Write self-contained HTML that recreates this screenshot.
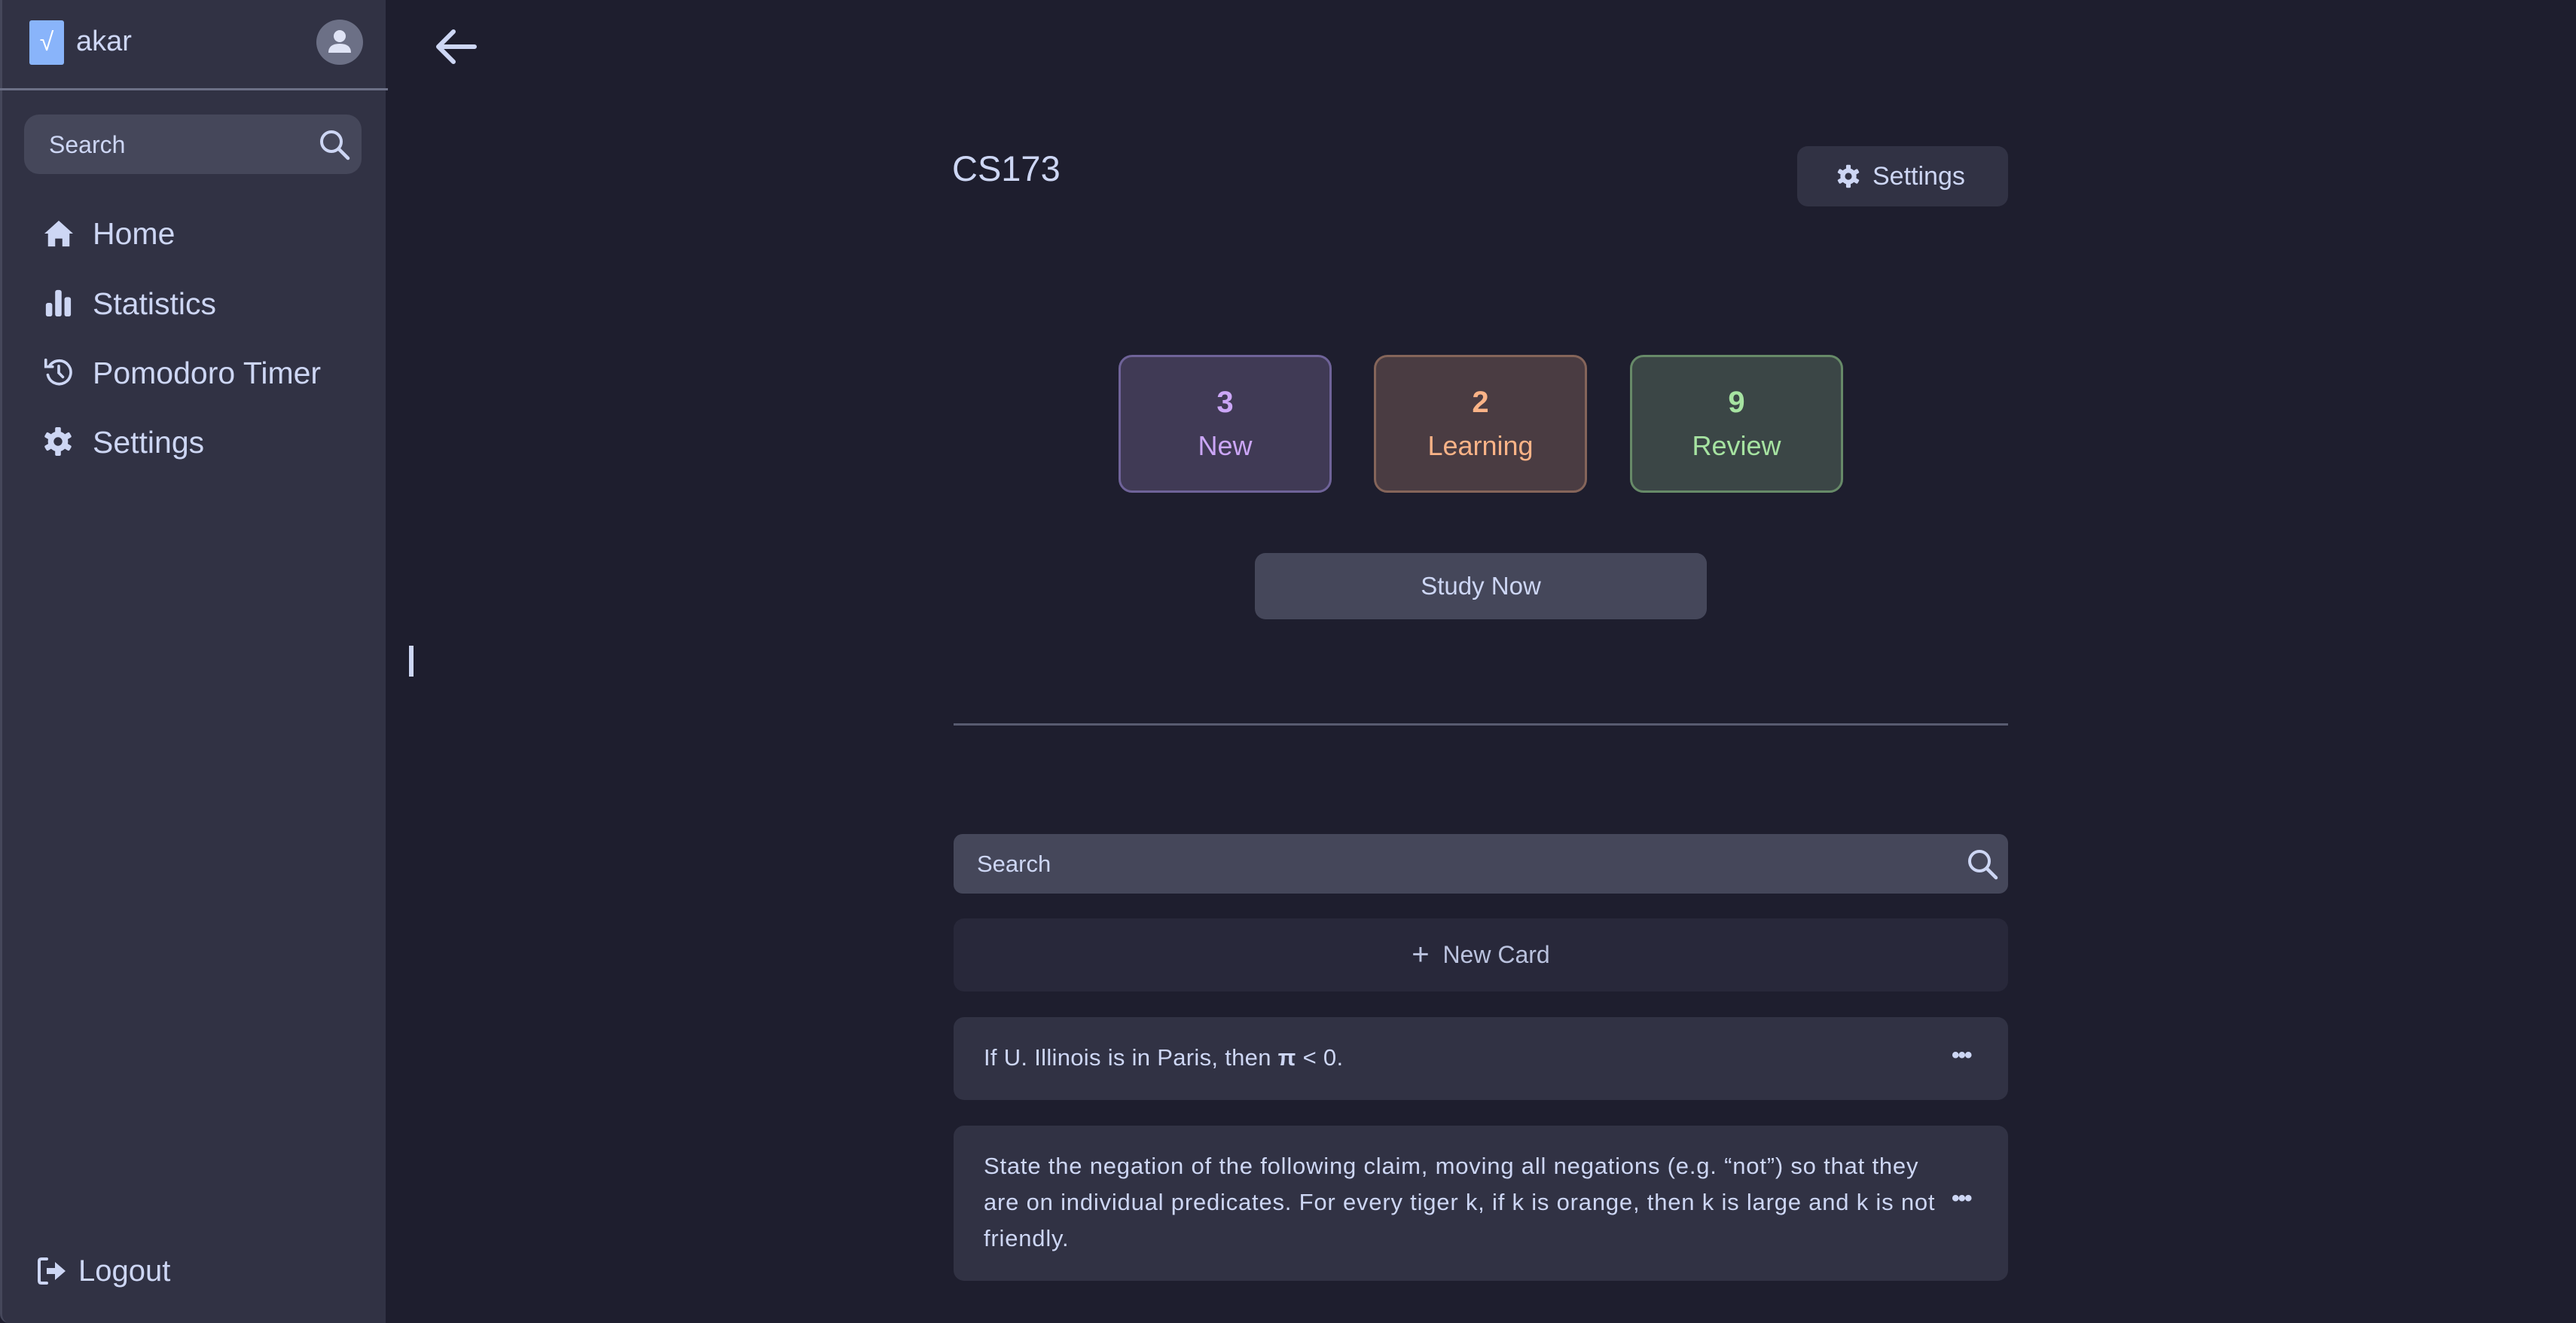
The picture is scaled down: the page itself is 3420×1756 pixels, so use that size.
<!DOCTYPE html>
<html><head><meta charset="utf-8"><style>
*{margin:0;padding:0;box-sizing:border-box}
body{width:3420px;height:1756px;background:#1e1e2e;font-family:"Liberation Sans",sans-serif;color:#cdd6f4;position:relative;overflow:hidden}
.a{position:absolute}
#side{left:0;top:0;width:512px;height:1756px;background:#313244;border-left:3px solid #45475a;border-radius:0 0 0 12px}
.nav{position:absolute;left:120px;font-size:41px;color:#cdd6f4;line-height:1}
.ic{position:absolute;left:54px}
.box{position:absolute;top:471px;width:283px;height:183px;border-radius:18px;border:3px solid;text-align:center}
.box .n{font-size:40px;font-weight:bold;margin-top:38px}
.box .l{font-size:36px;margin-top:14px}
.card{position:absolute;left:1266px;width:1400px;border-radius:14px;background:#313244}
</style></head><body>
<div id="side" class="a">
  <div class="a" style="left:36px;top:27px;width:46px;height:59px;background:#89b4fa;border-radius:3px;color:#fff;font-size:34px;text-align:center;line-height:59px">√</div>
  <div class="a" style="left:98px;top:34px;font-size:38px">akar</div>
  <div class="a" style="left:417px;top:26px;width:62px;height:60px;border-radius:50%;background:#6c7086">
    <svg width="62" height="60" viewBox="0 0 62 60"><circle cx="31" cy="22" r="8" fill="#dfe3f5"/><path d="M16 44 Q16 32 31 32 Q46 32 46 44 Z" fill="#dfe3f5"/></svg>
  </div>
  <div class="a" style="left:-3px;top:117px;width:515px;height:3px;background:#6c7086"></div>
  <div class="a" style="left:29px;top:152px;width:448px;height:79px;background:#45475a;border-radius:20px">
    <div class="a" style="left:33px;top:22px;font-size:32px;color:#cdd6f4">Search</div>
    <svg class="a" style="left:390px;top:18px" width="44" height="44" viewBox="0 0 44 44"><circle cx="18" cy="18" r="13" fill="none" stroke="#cdd6f4" stroke-width="4"/><path d="M28 28 L40 40" stroke="#cdd6f4" stroke-width="4.5" stroke-linecap="round"/></svg>
  </div>
  <svg class="ic" style="top:291px" width="42" height="38" viewBox="0 0 42 40"><path d="M21 2 L41 20 L36 20 L36 38 L26 38 L26 27 L16 27 L16 38 L6 38 L6 20 L1 20 Z" fill="#cdd6f4"/></svg>
  <div class="nav" style="top:290px">Home</div>
  <svg class="ic" style="top:383px" width="40" height="38" viewBox="0 0 40 40"><rect x="3" y="20" width="9" height="19" rx="3" fill="#cdd6f4"/><rect x="16" y="2" width="9" height="37" rx="3" fill="#cdd6f4"/><rect x="29" y="12" width="9" height="27" rx="3" fill="#cdd6f4"/></svg>
  <div class="nav" style="top:383px">Statistics</div>
  <svg class="ic" style="top:474px" width="42" height="40" viewBox="0 0 42 44"><path d="M8 12 A17 17 0 1 1 5 26" fill="none" stroke="#cdd6f4" stroke-width="4" stroke-linecap="round"/><path d="M2 4 L2 14 L12 14" fill="none" stroke="#cdd6f4" stroke-width="4" stroke-linecap="round"/><path d="M21 13 L21 23 L27 29" fill="none" stroke="#cdd6f4" stroke-width="4" stroke-linecap="round"/></svg>
  <div class="nav" style="top:475px">Pomodoro Timer</div>
  <svg class="ic" style="top:566px" width="40" height="40" viewBox="0 0 42 42"><g fill="#cdd6f4"><circle cx="21" cy="21" r="14"/><rect x="17" y="1" width="8" height="40" rx="2"/><rect x="17" y="1" width="8" height="40" rx="2" transform="rotate(60 21 21)"/><rect x="17" y="1" width="8" height="40" rx="2" transform="rotate(120 21 21)"/></g><circle cx="21" cy="21" r="6" fill="#313244"/></svg>
  <div class="nav" style="top:567px">Settings</div>
  <svg class="a" style="left:46px;top:1668px" width="42" height="38" viewBox="0 0 42 38"><path d="M13 3 L6 3 Q3 3 3 6 L3 32 Q3 35 6 35 L13 35" fill="none" stroke="#cdd6f4" stroke-width="4" stroke-linecap="round"/><path d="M13 15 L24 15 L24 7 L38 19 L24 31 L24 23 L13 23 Z" fill="#cdd6f4"/></svg>
  <div class="a" style="left:101px;top:1665px;font-size:40px">Logout</div>
</div>

<svg class="a" style="left:578px;top:38px" width="56" height="50" viewBox="0 0 56 50"><path d="M52 24 L6 24 M24 4 L4 24 L24 44" fill="none" stroke="#cdd6f4" stroke-width="6" stroke-linecap="round" stroke-linejoin="round"/></svg>
<div class="a" style="left:543px;top:857px;width:6px;height:41px;background:#cdd6f4"></div>

<div class="a" style="left:1264px;top:196px;font-size:47px">CS173</div>
<div class="a" style="left:2386px;top:194px;width:280px;height:80px;background:#313244;border-radius:14px">
  <svg class="a" style="left:52px;top:24px" width="32" height="32" viewBox="0 0 42 42"><g fill="#cdd6f4"><circle cx="21" cy="21" r="14"/><rect x="17" y="1" width="8" height="40" rx="2"/><rect x="17" y="1" width="8" height="40" rx="2" transform="rotate(60 21 21)"/><rect x="17" y="1" width="8" height="40" rx="2" transform="rotate(120 21 21)"/></g><circle cx="21" cy="21" r="6" fill="#313244"/></svg>
  <div class="a" style="left:100px;top:21px;font-size:34px">Settings</div>
</div>

<div class="box" style="left:1485px;background:#403a55;border-color:#6f6399;color:#cba6f7"><div class="n">3</div><div class="l">New</div></div>
<div class="box" style="left:1824px;background:#4a3c42;border-color:#85655a;color:#fab387"><div class="n">2</div><div class="l">Learning</div></div>
<div class="box" style="left:2164px;background:#3b4646;border-color:#678a68;color:#a6e3a1"><div class="n">9</div><div class="l">Review</div></div>

<div class="a" style="left:1666px;top:734px;width:600px;height:88px;background:#45475a;border-radius:14px;text-align:center;line-height:88px;font-size:33px">Study Now</div>

<div class="a" style="left:1266px;top:960px;width:1400px;height:3px;background:#585b70"></div>

<div class="a" style="left:1266px;top:1107px;width:1400px;height:79px;background:#45475a;border-radius:12px">
  <div class="a" style="left:31px;top:22px;font-size:31px">Search</div>
  <svg class="a" style="left:1344px;top:18px" width="44" height="44" viewBox="0 0 44 44"><circle cx="18" cy="18" r="13" fill="none" stroke="#cdd6f4" stroke-width="4"/><path d="M28 28 L40 40" stroke="#cdd6f4" stroke-width="4.5" stroke-linecap="round"/></svg>
</div>
<div class="card" style="top:1219px;height:97px;background:#28283a;text-align:center;line-height:97px;font-size:32px;color:#bac2de">
  <span style="font-size:40px;vertical-align:-2px">+</span>&nbsp; New Card
</div>
<div class="card" style="top:1350px;height:110px">
  <div class="a" style="left:40px;top:36px;font-size:31px;white-space:nowrap;letter-spacing:0.3px">If U. Illinois is in Paris, then <b>π</b> &lt; 0.</div>
  <div class="a" style="left:1325px;top:34px;font-size:30px;font-weight:bold;letter-spacing:-2px">•••</div>
</div>
<div class="card" style="top:1494px;height:206px">
  <div class="a" style="left:40px;top:30px;font-size:31px;letter-spacing:0.8px;line-height:48px;white-space:nowrap">State the negation of the following claim, moving all negations (e.g. “not”) so that they<br>are on individual predicates. For every tiger k, if k is orange, then k is large and k is not<br>friendly.</div>
  <div class="a" style="left:1325px;top:80px;font-size:30px;font-weight:bold;letter-spacing:-2px">•••</div>
</div>
</body></html>
